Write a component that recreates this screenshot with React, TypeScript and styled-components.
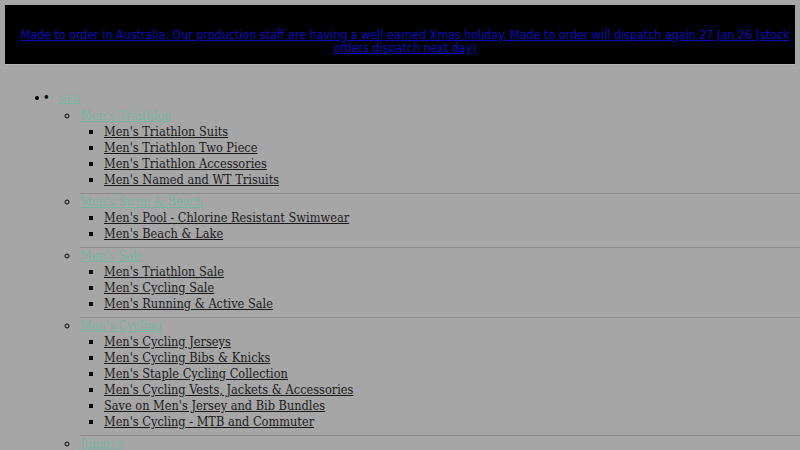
import React from 'react';
import styled, { createGlobalStyle } from 'styled-components';

interface MenuGroup {
  title: string;
  items: string[];
}

const groups: MenuGroup[] = [
  {
    title: "Men's Triathlon",
    items: ["Men's Triathlon Suits", "Men's Triathlon Two Piece", "Men's Triathlon Accessories", "Men's Named and WT Trisuits"],
  },
  {
    title: "Men's Swim & Beach",
    items: ["Men's Pool - Chlorine Resistant Swimwear", "Men's Beach & Lake"],
  },
  {
    title: "Men's Sale",
    items: ["Men's Triathlon Sale", "Men's Cycling Sale", "Men's Running & Active Sale"],
  },
  {
    title: "Men's Cycling",
    items: [
      "Men's Cycling Jerseys",
      "Men's Cycling Bibs & Knicks",
      "Men's Staple Cycling Collection",
      "Men's Cycling Vests, Jackets & Accessories",
      "Save on Men's Jersey and Bib Bundles",
      "Men's Cycling - MTB and Commuter",
    ],
  },
  { title: "Junior's", items: [] },
];

const GlobalStyle = createGlobalStyle`
  html, body {
    margin: 0;
    background: #a6a6a6;
    font-family: 'DejaVu Serif Condensed', 'DejaVu Serif', serif;
    font-stretch: condensed;
    overflow: hidden;
  }
`;

const Announcement = styled.div`
  margin: 5px 5px 0;
  min-height: 60px;
  box-sizing: border-box;
  padding: 23px 5px 9px 15px;
  background: #000;
  border-bottom: 1px solid #b3b3b3;
  text-align: center;
  font-family: 'DejaVu Sans Condensed', 'DejaVu Sans', sans-serif;
  font-stretch: condensed;
  font-size: 12.4px;
  line-height: 13px;
  a {
    color: #0c0cbf;
  }
`;

const Menu = styled.ul`
  margin: 24px 0 0;
  padding-left: 50px;
  list-style: disc;
  line-height: 16px;
  color: #000;
  font-size: 12.65px;
`;

// second bullet in front of the top-level label
const TopLabel = styled.div`
  margin-left: -7px;
  line-height: 18px;
  &::before {
    content: '•';
    margin-right: 8px;
  }
`;

const TopLink = styled.a`
  color: #79b4a2;
  font-size: 9.5px;
  text-transform: uppercase;
`;

const GroupList = styled.ul`
  margin: 0;
  padding-left: 30px;
  list-style: circle;
`;

const GroupItem = styled.li`
  & + & {
    border-top: 1px solid #8b8b8b;
  }
`;

const GroupLink = styled.a`
  color: #79b4a2;
`;

const SubList = styled.ul`
  margin: 0 0 5px;
  padding-left: 24px;
  list-style: square;
`;

const SubLink = styled.a`
  color: #1a1a1a;
`;

export default function App() {
  return (
    <>
      <GlobalStyle />
      <Announcement>
        <a href="#">
          Made to order in Australia. Our production staff are having a well earned Xmas holiday. Made to order will
          dispatch again 27 Jan 26 (stock orders dispatch next day)
        </a>
      </Announcement>
      <Menu>
        <li>
          <TopLabel>
            <TopLink href="#">Men</TopLink>
          </TopLabel>
          <GroupList>
            {groups.map(g => (
              <GroupItem key={g.title}>
                <GroupLink href="#">{g.title}</GroupLink>
                {g.items.length > 0 && (
                  <SubList>
                    {g.items.map(item => (
                      <li key={item}>
                        <SubLink href="#">{item}</SubLink>
                      </li>
                    ))}
                  </SubList>
                )}
              </GroupItem>
            ))}
          </GroupList>
        </li>
      </Menu>
    </>
  );
}
